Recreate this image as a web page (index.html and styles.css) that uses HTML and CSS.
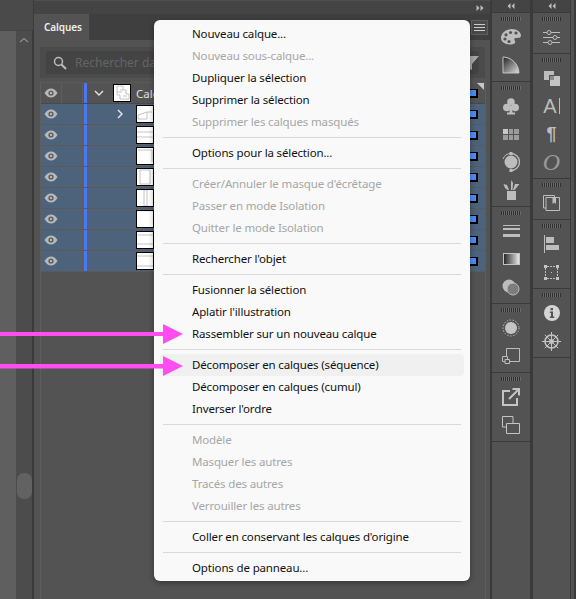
FILE: index.html

```html
<!DOCTYPE html>
<html lang="fr">
<head>
    <meta charset="UTF-8">
    <title>Calques</title>
    <link rel="stylesheet" href="styles.css">
</head>
<body>

<svg width="0" height="0" class="defs">
    <symbol id="eye" viewBox="0 0 14 10">
        <path d="M0.5 5C2.5 1.8 4.6 0.5 7 0.5S11.5 1.8 13.5 5C11.5 8.2 9.4 9.5 7 9.5S2.5 8.2 0.5 5Z" fill="#b9b9b9"/>
        <circle cx="7" cy="5" r="2.6" fill="#5a5a5a"/>
        <circle cx="7" cy="5" r="1.2" fill="#b9b9b9"/>
    </symbol>
    <symbol id="back" viewBox="0 0 8 6">
        <path d="M3.500 0 0.500 3 3.500 6ZM7.500 0 4.500 3 7.500 6Z" fill="#bdbdbd"/>
    </symbol>
</svg>

<div class="left">
    <div class="left-top"></div>
    <div class="left-body">
        <div class="canvas"></div>
        <div class="scroll">
            <svg class="scroll-up" width="10" height="6" viewBox="0 0 10 6"><path d="M1 5 5 1.500 9 5" fill="none" stroke="#8c8c8c" stroke-width="1.300"/></svg>
            <div class="scroll-thumb"></div>
        </div>
    </div>
</div>

<div class="panel">
    <div class="panel-top"><svg width="8" height="6" class="forward"><use href="#back"/></svg></div>
    <div class="tabs">
        <div class="tab">Calques</div>
        <div class="tab-menu"><span></span><span></span><span></span></div>
    </div>
    <div class="search-wrap">
        <div class="search">
            <svg width="14" height="14" viewBox="0 0 14 14"><circle cx="5.500" cy="5.500" r="4" fill="none" stroke="#bdbdbd" stroke-width="1.500"/><path d="M8.500 8.500 13 13" stroke="#bdbdbd" stroke-width="2"/></svg>
            <span class="search-text">Rechercher da</span>
            <svg class="filter" width="18" height="14" viewBox="0 0 18 14"><path d="M0 0H18L11 8V14L7 12V8Z" fill="#a8a8a8"/></svg>
        </div>
    </div>
    <div class="layers">
        <div class="row row-top">
            <div class="cell"><svg width="14" height="10"><use href="#eye"/></svg></div>
            <div class="cell"></div>
            <div class="stripe"></div>
            <div class="twist"><svg width="10" height="6" viewBox="0 0 10 6"><path d="M1 1 5 5 9 1" fill="none" stroke="#e4e4e4" stroke-width="1.400"/></svg></div>
            <div class="thumb"><svg viewBox="0 0 16 16"><path d="M3 1H9V5H12V9H15V14H6V10H3Z M6 5H9 M3 7H8 M9 11H13" fill="none" stroke="#c4c4c4"/></svg></div>
            <span class="name">Calq</span>
            <div class="mark"></div>
            <div class="corner"></div>
        </div>
        <div class="row sel">
            <div class="cell"><svg width="14" height="10"><use href="#eye"/></svg></div>
            <div class="cell"></div>
            <div class="stripe"></div>
            <div class="twist"><svg width="6" height="10" viewBox="0 0 6 10"><path d="M1 1 5 5 1 9" fill="none" stroke="#e8e8e8" stroke-width="1.400"/></svg></div>
            <div class="thumb"><svg viewBox="0 0 16 16"><path d="M1 9 10 6V13H1Z M10 6H15" fill="none" stroke="#c4c4c4"/></svg></div>
            <div class="mark"></div>
        </div>
        <div class="row sel">
            <div class="cell"><svg width="14" height="10"><use href="#eye"/></svg></div>
            <div class="cell"></div>
            <div class="stripe"></div>
            <div class="twist"></div>
            <div class="thumb"><svg viewBox="0 0 16 16"><path d="M0 5H16 M0 10H16" fill="none" stroke="#c4c4c4"/></svg></div>
            <div class="mark"></div>
        </div>
        <div class="row sel">
            <div class="cell"><svg width="14" height="10"><use href="#eye"/></svg></div>
            <div class="cell"></div>
            <div class="stripe"></div>
            <div class="twist"></div>
            <div class="thumb"><svg viewBox="0 0 16 16"><path d="M1 2H15V14" fill="none" stroke="#c4c4c4"/></svg></div>
            <div class="mark"></div>
        </div>
        <div class="row sel">
            <div class="cell"><svg width="14" height="10"><use href="#eye"/></svg></div>
            <div class="cell"></div>
            <div class="stripe"></div>
            <div class="twist"></div>
            <div class="thumb"><svg viewBox="0 0 16 16"><path d="M3 1V15H13V1Z" fill="none" stroke="#c4c4c4"/></svg></div>
            <div class="mark"></div>
        </div>
        <div class="row sel">
            <div class="cell"><svg width="14" height="10"><use href="#eye"/></svg></div>
            <div class="cell"></div>
            <div class="stripe"></div>
            <div class="twist"></div>
            <div class="thumb"><svg viewBox="0 0 16 16"><path d="M7 0V16H10V0Z" fill="none" stroke="#c4c4c4"/></svg></div>
            <div class="mark"></div>
        </div>
        <div class="row sel">
            <div class="cell"><svg width="14" height="10"><use href="#eye"/></svg></div>
            <div class="cell"></div>
            <div class="stripe"></div>
            <div class="twist"></div>
            <div class="thumb"><svg viewBox="0 0 16 16"><path d="M0 0H16" fill="none" stroke="#e4e4e4"/></svg></div>
            <div class="mark"></div>
        </div>
        <div class="row sel">
            <div class="cell"><svg width="14" height="10"><use href="#eye"/></svg></div>
            <div class="cell"></div>
            <div class="stripe"></div>
            <div class="twist"></div>
            <div class="thumb"><svg viewBox="0 0 16 16"><path d="M0 3H16 M0 12H16" fill="none" stroke="#c4c4c4"/></svg></div>
            <div class="mark"></div>
        </div>
        <div class="row sel">
            <div class="cell"><svg width="14" height="10"><use href="#eye"/></svg></div>
            <div class="cell"></div>
            <div class="stripe"></div>
            <div class="twist"></div>
            <div class="thumb"><svg viewBox="0 0 16 16"><path d="M0 3H16 M0 13H16" fill="none" stroke="#c4c4c4"/></svg></div>
            <div class="mark"></div>
        </div>
    </div>
</div>

<div class="dock dock-one">
    <div class="dock-head"><svg width="8" height="6"><use href="#back"/></svg></div>
    <div class="group">
        <div class="grip"></div>
        <div class="tool"><svg width="20" height="16" viewBox="0 0 20 16"><path d="M11 0C16 0 20 3 20 6.500C20 9 17 9 15 9C13 9 13 11 14 12C15 14 13 15.500 10 15.500C4 15.500 0 13 0 9C0 4 5 0 11 0Z" fill="#bdbdbd"/><circle cx="4" cy="10" r="1.600" fill="#535353"/><circle cx="8" cy="12.500" r="1.600" fill="#535353"/><circle cx="5" cy="5.800" r="1.600" fill="#535353"/><circle cx="9.500" cy="3.500" r="1.600" fill="#535353"/><circle cx="15" cy="4" r="1.600" fill="#535353"/></svg></div>
        <div class="tool"><svg width="18" height="18" viewBox="0 0 18 18"><defs><linearGradient id="fan" x1="0" y1="0" x2="1" y2="1"><stop offset="0" stop-color="#222"/><stop offset="1" stop-color="#ddd"/></linearGradient></defs><path d="M1 1C9 1 17 8 17 17H1Z" fill="url(#fan)" stroke="#c4c4c4"/></svg></div>
    </div>
    <div class="group">
        <div class="grip"></div>
        <div class="tool"><svg width="16" height="17" viewBox="0 0 16 17"><g fill="#bdbdbd"><circle cx="8" cy="4" r="3.800"/><circle cx="3.800" cy="9.500" r="3.800"/><circle cx="12.200" cy="9.500" r="3.800"/><path d="M7 8H9L9.500 14.500H12V16.500H4V14.500H6.500Z"/></g></svg></div>
        <div class="tool"><svg width="16" height="11" viewBox="0 0 16 11"><path d="M0 0H16V11H0Z" fill="#9c9c9c"/><path d="M5.500 0V11M10.500 0V11M0 5.500H16" stroke="#535353"/><path d="M0 0H5V5H0Z" fill="#c8c8c8"/></svg></div>
        <div class="tool"><svg width="18" height="20" viewBox="0 0 18 20"><circle cx="9" cy="10" r="6.500" fill="#bdbdbd"/><path d="M9 1.500A8.500 8.500 0 0 1 9 18.500" fill="none" stroke="#bdbdbd" stroke-width="1.300"/><path d="M9 1.500A8.500 8.500 0 0 0 1 7" fill="none" stroke="#bdbdbd"/><rect x="7.500" y="0" width="3" height="3" fill="#bdbdbd"/><rect x="7.500" y="17" width="3" height="3" fill="#bdbdbd"/></svg></div>
        <div class="tool"><svg width="17" height="20" viewBox="0 0 17 20"><path d="M4 11H13V20H4Z" fill="#bdbdbd"/><path d="M6 10 4 5 0.500 4 2 8 4.500 10M8 10V3L8.500 0L10 3 9.500 10M10 10 12 4 16.500 4 14 7 11.500 10" fill="#bdbdbd"/></svg></div>
    </div>
    <div class="group">
        <div class="grip"></div>
        <div class="tool"><svg width="17" height="13" viewBox="0 0 17 13"><path d="M0 0.500H17" stroke="#bdbdbd"/><path d="M0 4H17" stroke="#bdbdbd" stroke-width="2"/><path d="M0 10.500H17" stroke="#bdbdbd" stroke-width="3"/></svg></div>
        <div class="tool"><svg width="17" height="12" viewBox="0 0 17 12"><defs><linearGradient id="ramp"><stop offset="0" stop-color="#222"/><stop offset="1" stop-color="#eee"/></linearGradient></defs><rect x="0.500" y="0.500" width="16" height="11" fill="url(#ramp)" stroke="#c4c4c4"/></svg></div>
        <div class="tool"><svg width="18" height="17" viewBox="0 0 18 17"><circle cx="7" cy="7" r="6.500" fill="#bdbdbd"/><circle cx="11" cy="10" r="6" fill="#7d7d7d" stroke="#bdbdbd"/></svg></div>
    </div>
    <div class="group">
        <div class="grip"></div>
        <div class="tool"><svg width="18" height="18" viewBox="0 0 18 18"><circle cx="9" cy="9" r="6" fill="#c4c4c4"/><circle cx="9" cy="9" r="8" fill="none" stroke="#bdbdbd" stroke-dasharray="1.500 1.500"/></svg></div>
        <div class="tool"><svg width="18" height="16" viewBox="0 0 18 16"><path d="M4.500 0.500H17.500V13.500H4.500Z" fill="none" stroke="#bdbdbd"/><path d="M0.500 8.500H5.500V13.500H0.500Z" fill="#535353" stroke="#bdbdbd"/><path d="M3 11.500H7.500V15.500H3Z" fill="#535353" stroke="#bdbdbd"/></svg></div>
    </div>
    <div class="group">
        <div class="grip"></div>
        <div class="tool"><svg width="18" height="18" viewBox="0 0 18 18"><path d="M8 3H1V17H15V10" fill="none" stroke="#c4c4c4" stroke-width="2"/><path d="M7 11 16 2M10.500 1H17V7.500" fill="none" stroke="#c4c4c4" stroke-width="2"/></svg></div>
        <div class="tool"><svg width="18" height="18" viewBox="0 0 18 18"><path d="M0.500 0.500H11V11H0.500Z" fill="none" stroke="#c4c4c4"/><path d="M4.500 7.500H17.500V17.500H4.500Z" fill="#535353" stroke="#c4c4c4"/></svg></div>
    </div>
    <div class="group-rest"></div>
</div>

<div class="dock dock-two">
    <div class="dock-head"><svg width="8" height="6"><use href="#back"/></svg></div>
    <div class="group">
        <div class="grip"></div>
        <div class="tool"><svg width="17" height="15" viewBox="0 0 17 15"><path d="M0 2.500H17M0 7.500H17M0 12.500H17" stroke="#bdbdbd"/><circle cx="6" cy="2.500" r="2" fill="#535353" stroke="#bdbdbd"/><circle cx="12" cy="7.500" r="2" fill="#535353" stroke="#bdbdbd"/><circle cx="7" cy="12.500" r="2" fill="#535353" stroke="#bdbdbd"/></svg></div>
    </div>
    <div class="group">
        <div class="grip"></div>
        <div class="tool"><svg width="16" height="15" viewBox="0 0 16 15"><path d="M0 0H10V4H5V9H0Z" fill="#bdbdbd"/><path d="M6 5H16V15H6Z" fill="#c4c4c4"/><path d="M6 5H10V9H6Z" fill="#8b8b8b"/></svg></div>
        <div class="tool glyph-wrap"><span class="glyph">A</span><span class="bar"></span></div>
        <div class="tool glyph-wrap"><span class="glyph glyph-para">¶</span></div>
        <div class="tool glyph-wrap"><span class="glyph glyph-italic">O</span></div>
    </div>
    <div class="group">
        <div class="grip"></div>
        <div class="tool"><svg width="17" height="16" viewBox="0 0 17 16"><path d="M0.500 0.500H11.500V13H0.500Z" fill="none" stroke="#bdbdbd"/><path d="M3 2.500H16.500V15.500H3Z" fill="#535353" stroke="#bdbdbd"/><path d="M9.500 2.500H13V9L11.250 7.500 9.500 9Z" fill="#bdbdbd"/></svg></div>
    </div>
    <div class="group">
        <div class="grip"></div>
        <div class="tool"><svg width="15" height="18" viewBox="0 0 15 18"><path d="M0.500 0V18" stroke="#bdbdbd"/><path d="M2 2H10V8H2Z M2 10H15V15H2Z" fill="#bdbdbd"/></svg></div>
        <div class="tool"><svg width="15" height="15" viewBox="0 0 15 15"><path d="M1.500 3V12M13.500 3V12M3 1.500H12M3 13.500H12" stroke="#bdbdbd" stroke-dasharray="2 1"/><path d="M0 0H3V3H0ZM12 0H15V3H12ZM0 12H3V15H0ZM12 12H15V15H12ZM7 7H8V8H7Z" fill="#c4c4c4"/></svg></div>
    </div>
    <div class="group">
        <div class="grip"></div>
        <div class="tool"><svg width="16" height="16" viewBox="0 0 16 16"><circle cx="8" cy="8" r="8" fill="#d4d4d4"/><path d="M6.500 3H9V5.300H6.500ZM5.800 6.500H9V11.500H10.300V13H5.800V11.500H7V8H5.800Z" fill="#535353"/></svg></div>
        <div class="tool"><svg width="19" height="19" viewBox="0 0 19 19"><g fill="none" stroke="#c4c4c4"><circle cx="9.500" cy="9.500" r="6.500" stroke-width="1.500"/><circle cx="9.500" cy="9.500" r="2"/><path d="M9.500 0V19M0 9.500H19M2.800 2.800 16.200 16.200M16.200 2.800 2.800 16.200"/></g></svg></div>
    </div>
    <div class="group-rest"></div>
</div>

<div class="edge"></div>

<ul class="menu">
    <li>Nouveau calque...</li>
    <li class="off">Nouveau sous-calque...</li>
    <li>Dupliquer la sélection</li>
    <li>Supprimer la sélection</li>
    <li class="off">Supprimer les calques masqués</li>
    <li class="sep"></li>
    <li>Options pour la sélection...</li>
    <li class="sep"></li>
    <li class="off">Créer/Annuler le masque d'écrêtage</li>
    <li class="off">Passer en mode Isolation</li>
    <li class="off">Quitter le mode Isolation</li>
    <li class="sep"></li>
    <li>Rechercher l'objet</li>
    <li class="sep"></li>
    <li>Fusionner la sélection</li>
    <li>Aplatir l'illustration</li>
    <li>Rassembler sur un nouveau calque</li>
    <li class="sep"></li>
    <li class="hover">Décomposer en calques (séquence)</li>
    <li>Décomposer en calques (cumul)</li>
    <li>Inverser l'ordre</li>
    <li class="sep"></li>
    <li class="off">Modèle</li>
    <li class="off">Masquer les autres</li>
    <li class="off">Tracés des autres</li>
    <li class="off">Verrouiller les autres</li>
    <li class="sep"></li>
    <li>Coller en conservant les calques d'origine</li>
    <li class="sep"></li>
    <li>Options de panneau...</li>
</ul>

<svg class="arrows" width="184" height="60" viewBox="0 0 184 60">
    <path d="M0 8H163V0L183 10 163 20V12H0Z" fill="#ff4df0"/>
    <path d="M0 40H163V32L183 42 163 52V44.500H0Z" fill="#ff4df0"/>
</svg>

</body>
</html>
```

FILE: styles.css

```css
* { box-sizing: border-box; }
html, body { height: 100%; }
body { margin: 0; display: flex; overflow: hidden; background: #3a3a3a; font-family: "Noto Sans", sans-serif; font-size: 12px; color: #ddd; }
.defs { position: absolute; }

/* document area on the left */
.left { width: 33px; flex: none; display: flex; flex-direction: column; margin-right: 1px; }
.left-top { height: 30px; background: #4a4a4a; }
.left-body { flex: 1; display: flex; border-top: 1px solid #454545; }
.canvas { width: 16px; background: #5f5f5f; }
.scroll { width: 16px; background: #4c4c4c; position: relative; padding-top: 6px; }
.scroll-up { display: block; margin-left: 3px; }
.scroll-thumb { position: absolute; left: 1px; top: 442px; width: 15px; height: 26px; background: #626262; border-radius: 7px; }

/* layers panel */
.panel { width: 456px; flex: none; background: #535353; display: flex; flex-direction: column; margin-right: 2px; }
.panel-top { height: 14px; background: #444; border-top: 1px solid #4e4e4e; display: flex; align-items: center; justify-content: flex-end; padding-right: 6px; }
.tabs { height: 26px; background: #3f3f3f; display: flex; justify-content: space-between; align-items: center; }
.tab { width: 55px; height: 100%; background: #535353; padding-left: 10px; line-height: 26px; font-size: 10px; font-weight: 600; letter-spacing: -0.1px; color: #eee; }
.tab-menu { width: 17px; height: 15px; margin-right: 2px; border: 1px solid #5f5f5f; background: #4a4a4a; display: flex; flex-direction: column; justify-content: center; gap: 2px; padding: 0 2px; }
.tab-menu span { height: 1px; background: #ccc; }
.search-wrap { margin: 7px 5px 0 6px; height: 31px; padding: 4px 6px; background: #4b4b4b; }
.search { height: 23px; background: #444; border-radius: 3px; display: flex; align-items: center; padding-left: 7px; white-space: nowrap; }
.search-text { margin-left: 8px; color: #646464; font-size: 12px; }
.filter { margin-left: auto; }
.layers { flex: 1; margin: 4px 4px 0 6px; border-left: 1px solid #5e5e5e; border-right: 1px solid #5e5e5e; }
.row { height: 21px; display: flex; align-items: center; border-bottom: 1px solid #5a5a5a; position: relative; }
.row-top { height: 22px; border-top: 1px solid #5a5a5a; border-bottom: 1px solid #494949; }
.sel { background: #4c637b; }
.cell { width: 21px; height: 100%; flex: none; border-right: 1px solid #5e5e5e; display: flex; align-items: center; justify-content: center; }
.stripe { width: 3px; height: 100%; flex: none; background: #4a78f5; margin-left: 1px; }
.twist { width: 12px; flex: none; margin: 0 10px 0 27px; display: flex; justify-content: center; }
.row-top .twist { margin: 0 8px 0 6px; }
.thumb { width: 18px; height: 18px; flex: none; background: #fff; border: 1px solid #000; }
.thumb svg { display: block; width: 16px; height: 16px; }
.name { margin-left: 5px; color: #e0e0e0; font-size: 11.5px; }
.mark { width: 12px; height: 9px; flex: none; margin-left: auto; margin-right: 7px; background: #4a8cff; border: 1px solid #000; border-width: 1px 2px 2px 1px; }
.corner { position: absolute; top: 0; right: 1px; width: 0; height: 0; border-top: 7px solid #c8c8c8; border-left: 7px solid transparent; }

/* right docks */
.dock { flex: none; display: flex; flex-direction: column; gap: 1px; }
.dock-one { width: 38px; margin-right: 3px; }
.dock-two { width: 37px; }
.edge { flex: 1; background: #535353; border-left: 1px solid #3a3a3a; border-right: 2px solid #3a3a3a; }
.dock-head { height: 12px; background: #444; display: flex; align-items: center; justify-content: center; }
.forward { transform: scaleX(-1); }
.group { background: #535353; padding: 4px 0 2px; }
.group-rest { flex: 1; background: #535353; }
.grip { height: 4px; margin: 0 9px 2px; background: repeating-linear-gradient(90deg, #2f2f2f 0 1px, #6a6a6a 1px 2px); }
.tool { height: 28px; display: flex; align-items: center; justify-content: center; color: #bdbdbd; }
.glyph { font-family: "Liberation Sans", sans-serif; font-size: 20px; line-height: 28px; }
.bar { width: 1px; height: 16px; margin-left: 2px; background: #bdbdbd; }
.glyph-para { font-weight: bold; font-size: 18px; }
.glyph-italic { font-family: "Liberation Serif", serif; font-style: italic; font-size: 24px; color: #9a9a9a; }

/* context menu */
.menu { position: absolute; left: 154px; top: 20px; width: 316px; height: 561px; margin: 0; padding: 3px 6px 2px; list-style: none; background: #f9f9f9; border-radius: 6px; box-shadow: 0 2px 6px rgba(0, 0, 0, 0.35); color: #111; font-size: 11.5px; letter-spacing: -0.15px; }
.menu li { height: 22px; line-height: 22px; padding-left: 32px; white-space: nowrap; border-radius: 4px; }
.menu .off { color: #a6a6a6; }
.menu .hover { background: #f0f0f0; }
.menu .sep { height: 9px; padding: 0; margin: 0 3px; background: linear-gradient(#d9d9d9, #d9d9d9) center / 100% 1px no-repeat; border-radius: 0; }

.arrows { position: absolute; left: 0; top: 324px; }
```
